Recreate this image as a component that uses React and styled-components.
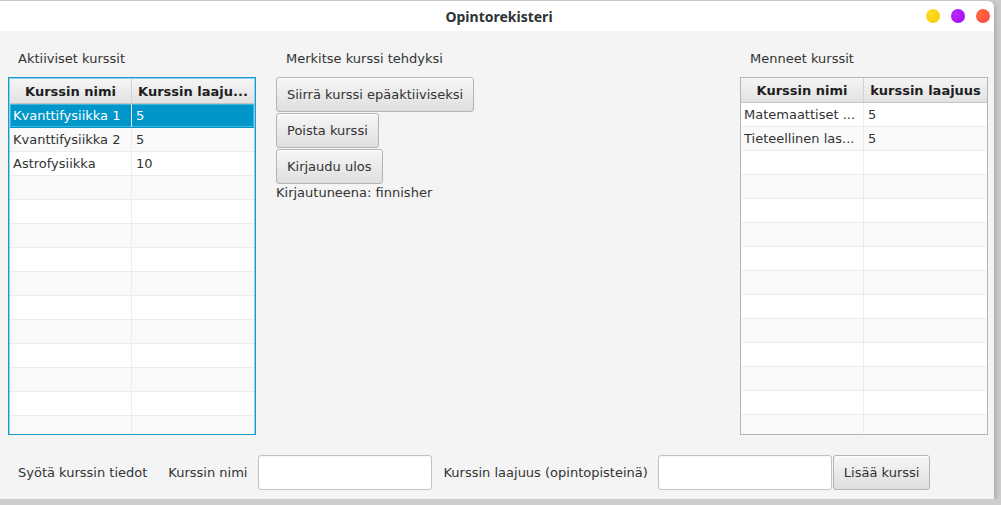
import React from "react";
import styled, { createGlobalStyle, css } from "styled-components";

const GlobalStyle = createGlobalStyle`
  html, body {
    margin: 0;
    padding: 0;
    background: #cdcdcd;
  }
  body {
    font-family: "DejaVu Sans", "Liberation Sans", sans-serif;
    font-size: 13px;
    color: #333333;
  }
`;

const activeCourses = [
  ["Kvanttifysiikka 1", "5"],
  ["Kvanttifysiikka 2", "5"],
  ["Astrofysiikka", "10"],
];

const pastCourses = [
  ["Matemaattiset ...", "5"],
  ["Tieteellinen las...", "5"],
];

const ROW_COUNT = 14;

const CourseTable = ({ focused, headers, rows, selected }) => {
  const filled = Array.from({ length: ROW_COUNT }, (_, i) => rows[i] || ["", ""]);
  const col = focused ? 121 : 122;
  return (
    <TableFrame $focused={focused}>
      <HeaderRow $col={col}>
        <HeaderCell>{headers[0]}</HeaderCell>
        <HeaderCell>{headers[1]}</HeaderCell>
      </HeaderRow>
      {filled.map((row, i) => (
        <Row key={i} $col={col} $odd={i % 2 === 1} $selected={i === selected}>
          <Cell>{row[0]}</Cell>
          <Cell>{row[1]}</Cell>
        </Row>
      ))}
    </TableFrame>
  );
};

const App = () => {
  return (
    <>
      <GlobalStyle />
      <Window>
        <TitleBar>
          <Title>Opintorekisteri</Title>
          <Controls>
            <Dot $color="#f7c600" $edge="#ffdf2a" />
            <Dot $color="#a300ee" $edge="#b92cff" />
            <Dot $color="#ff4343" $edge="#ff6a3a" />
          </Controls>
        </TitleBar>
        <Body>
          <Columns>
            <Column>
              <Caption>Aktiiviset kurssit</Caption>
              <CourseTable
                focused
                headers={["Kurssin nimi", "Kurssin laaju..."]}
                rows={activeCourses}
                selected={0}
              />
            </Column>
            <Column>
              <Caption>Merkitse kurssi tehdyksi</Caption>
              <ButtonStack>
                <Button>Siirrä kurssi epäaktiiviseksi</Button>
                <Button>Poista kurssi</Button>
                <Button>Kirjaudu ulos</Button>
                <Status>Kirjautuneena: finnisher</Status>
              </ButtonStack>
            </Column>
            <Column>
              <Caption>Menneet kurssit</Caption>
              <CourseTable
                headers={["Kurssin nimi", "kurssin laajuus"]}
                rows={pastCourses}
              />
            </Column>
          </Columns>
          <FormRow>
            <FormLabel $gap={21}>Syötä kurssin tiedot</FormLabel>
            <FormLabel $gap={11}>Kurssin nimi</FormLabel>
            <Input $gap={11} />
            <FormLabel $gap={10}>Kurssin laajuus (opintopisteinä)</FormLabel>
            <Input $gap={1} />
            <Button>Lisää kurssi</Button>
          </FormRow>
        </Body>
      </Window>
    </>
  );
};

const Window = styled.div`
  margin-top: 1px;
  width: 994px;
  height: 498px;
  display: flex;
  flex-direction: column;
  background: #f4f4f4;
  border-top-right-radius: 6px;
  overflow: hidden;
  box-shadow: 2px 2px 5px rgba(0, 0, 0, 0.18);
`;

const TitleBar = styled.div`
  position: relative;
  height: 30px;
  flex: none;
  display: flex;
  align-items: center;
  justify-content: center;
  background: #ffffff;
`;

const Title = styled.div`
  font-family: "Noto Sans", "DejaVu Sans", sans-serif;
  font-weight: 700;
  font-size: 14px;
  color: #2e3436;
  padding-left: 4px;
`;

const Controls = styled.div`
  position: absolute;
  right: 4px;
  top: 8px;
  display: flex;
  gap: 11px;
`;

const Dot = styled.span`
  width: 14px;
  height: 14px;
  border-radius: 50%;
  background: radial-gradient(circle at 35% 35%, ${(p) => p.$edge}, ${(p) => p.$color});
`;

const Body = styled.div`
  flex: 1;
  display: flex;
  flex-direction: column;
  padding: 20px 6px 0 8px;
`;

const Columns = styled.div`
  display: grid;
  grid-template-columns: 248px 1fr 248px;
  column-gap: 20px;
`;

const Column = styled.div`
  display: flex;
  flex-direction: column;
`;

const Caption = styled.div`
  line-height: 16px;
  padding-left: 10px;
  margin-bottom: 10px;
`;

const TableFrame = styled.div`
  height: 358px;
  box-sizing: border-box;
  overflow: hidden;
  background: #ffffff;
  border: 1px solid #b5b5b5;
  ${(p) =>
    p.$focused &&
    css`
      border-color: #1a9bd0;
      box-shadow: inset 0 0 0 1px #8fd0ec;
      padding: 1px;
    `}
`;

const HeaderRow = styled.div`
  display: grid;
  grid-template-columns: ${(p) => p.$col}px 1fr;
  height: 25px;
  background: linear-gradient(#f5f5f5, #e2e2e2);
  border-bottom: 1px solid #c4c4c4;
  box-sizing: border-box;
`;

const HeaderCell = styled.div`
  display: flex;
  align-items: center;
  justify-content: center;
  font-weight: 700;
  color: #1e1e1e;
  white-space: nowrap;
  overflow: hidden;
  & + & {
    border-left: 1px solid #d2d2d2;
  }
`;

const Row = styled.div`
  display: grid;
  grid-template-columns: ${(p) => p.$col}px 1fr;
  height: 24px;
  box-sizing: border-box;
  border-bottom: 1px solid #ececec;
  background: ${(p) => (p.$odd ? "#f9f9f9" : "#ffffff")};
  color: #333333;
  ${(p) =>
    p.$selected &&
    css`
      background: #0096c9;
      color: #ffffff;
      border-bottom-color: #0096c9;
      box-shadow: inset 0 0 0 1px #40b3da;
    `}
`;

const Cell = styled.div`
  display: flex;
  align-items: center;
  padding: 0 3px;
  white-space: nowrap;
  overflow: hidden;
  & + & {
    border-left: 1px solid #ececec;
    padding-left: 4px;
  }
`;

const ButtonStack = styled.div`
  display: flex;
  flex-direction: column;
  align-items: flex-start;
  gap: 1px;
`;

const Button = styled.button`
  height: 35px;
  padding: 0 10px;
  font-family: inherit;
  font-size: 13px;
  color: #333333;
  background: linear-gradient(#f7f7f7, #dedede);
  border: 1px solid #b4b4b4;
  border-radius: 3px;
  box-shadow: inset 0 1px 0 #ffffff;
  cursor: pointer;
`;

const Status = styled.div`
  line-height: 16px;
`;

const FormRow = styled.div`
  display: flex;
  align-items: center;
  margin-top: 20px;
  padding-left: 10px;
`;

const FormLabel = styled.span`
  margin-right: ${(p) => p.$gap}px;
  white-space: nowrap;
`;

const Input = styled.input`
  width: 174px;
  height: 35px;
  box-sizing: border-box;
  margin-right: ${(p) => p.$gap}px;
  background: #ffffff;
  border: 1px solid #c2c2c2;
  border-radius: 3px;
  box-shadow: inset 0 1px 1px rgba(0, 0, 0, 0.04);
  font-family: inherit;
  font-size: 13px;
  outline: none;
`;

export default App;
